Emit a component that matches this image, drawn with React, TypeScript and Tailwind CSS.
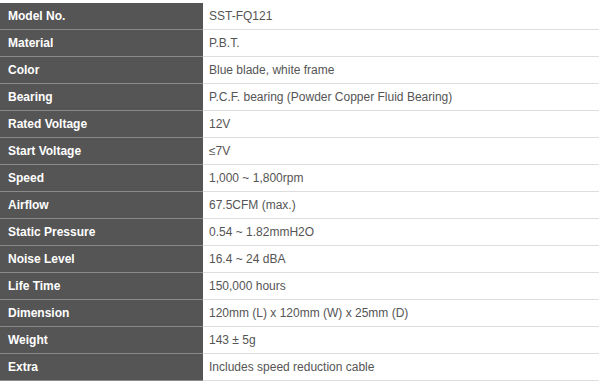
const specs: [string, string][] = [
  ['Model No.', 'SST-FQ121'],
  ['Material', 'P.B.T.'],
  ['Color', 'Blue blade, white frame'],
  ['Bearing', 'P.C.F. bearing (Powder Copper Fluid Bearing)'],
  ['Rated Voltage', '12V'],
  ['Start Voltage', '≤7V'],
  ['Speed', '1,000 ~ 1,800rpm'],
  ['Airflow', '67.5CFM (max.)'],
  ['Static Pressure', '0.54 ~ 1.82mmH2O'],
  ['Noise Level', '16.4 ~ 24 dBA'],
  ['Life Time', '150,000 hours'],
  ['Dimension', '120mm (L) x 120mm (W) x 25mm (D)'],
  ['Weight', '143 ± 5g'],
  ['Extra', 'Includes speed reduction cable'],
];

export default function App() {
  return (
    <div className="w-[600px] h-[381px] bg-white pt-[3px] font-['Liberation_Sans',Arial,sans-serif] text-[12px]">
      <div className="w-[599px] flex flex-col">
        {specs.map(([label, value]) => (
          <div key={label} className="flex h-[27px]">
            <div className="w-[203px] shrink-0 bg-[#555555] border-b border-[#8a8a8a] pl-[8px] flex items-center font-bold text-white">
              {label}
            </div>
            <div className="flex-1 border-b border-[#dddddd] pl-[6px] flex items-center text-[#555555]">
              {value}
            </div>
          </div>
        ))}
      </div>
    </div>
  );
}
